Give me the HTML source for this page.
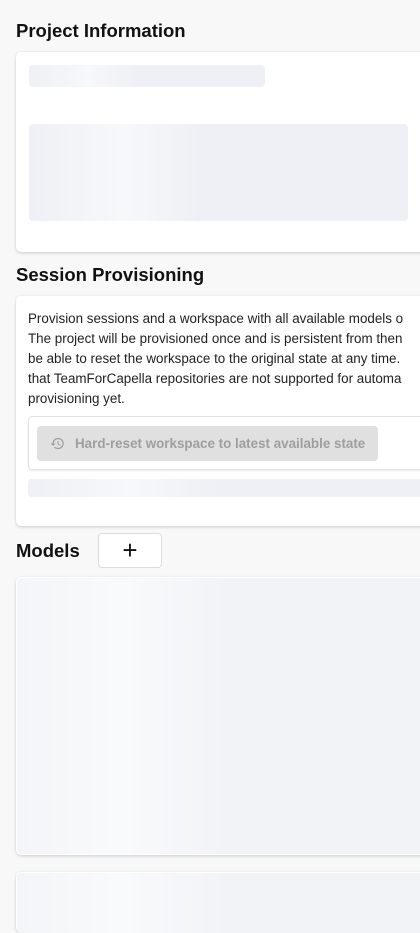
<!DOCTYPE html>
<html><head><style>
body{margin:0;width:420px;height:920px;overflow:hidden;background:#f8f8f9;font-family:"Liberation Sans",sans-serif;position:relative}
.h{position:absolute;left:16px;font-size:18.5px;font-weight:bold;color:#111}
.card{position:absolute;left:16px;width:420px;background:#fff;border-radius:5px;box-shadow:0 1px 3px rgba(0,0,0,.18)}
.sk{position:absolute;border-radius:4px;background:linear-gradient(90deg,#eff0f5 0%,#f7f8fa 25%,#eff0f5 45%,#eff0f5 100%)}
.sk2{position:absolute;border-radius:4px;background:linear-gradient(90deg,#f4f5f8 0%,#f9fafb 25%,#f2f3f7 50%,#f2f3f7 100%)}
.txt{position:absolute;left:12px;top:13px;font-size:13.4px;line-height:20px;color:#222;white-space:nowrap}
</style></head><body>
<div class="h" style="top:20px">Project Information</div>
<div class="card" style="top:52px;height:200px">
<div class="sk" style="left:13px;top:13px;width:236px;height:22px"></div>
<div class="sk" style="left:13px;top:72px;width:379px;height:97px"></div>
</div>
<div class="h" style="top:264px">Session Provisioning</div>
<div class="card" style="top:296px;height:230px">
<div class="txt">Provision sessions and a workspace with all available models o<br>The project will be provisioned once and is persistent from then<br>be able to reset the workspace to the original state at any time.<br>that TeamForCapella repositories are not supported for automa<br>provisioning yet.</div>
<div style="position:absolute;left:12px;top:120px;width:420px;height:52px;border:1px solid #e2e2e2;border-radius:4px;box-shadow:0 1px 2px rgba(0,0,0,.08)"></div>
<div style="position:absolute;left:21px;top:130px;width:341px;height:35px;background:#e0e0e0;border-radius:4px;color:#9e9e9e;font-size:13.4px;font-weight:bold;line-height:35px">
<svg style="position:absolute;left:13px;top:10px" width="15" height="15" viewBox="0 0 24 24" fill="#9e9e9e"><path d="M13 3a9 9 0 0 0-9 9H1l3.9 3.9L9 12H6a7 7 0 1 1 2.05 4.95l-1.42 1.42A9 9 0 1 0 13 3zm-1 5v5l4.25 2.52.77-1.28-3.52-2.09V8z"/></svg>
<span style="position:absolute;left:38px">Hard-reset workspace to latest available state</span></div>
<div class="sk" style="left:12px;top:183px;width:410px;height:18px"></div>
</div>
<div class="h" style="top:540px">Models</div>
<div style="position:absolute;left:98px;top:533px;width:62px;height:33px;border:1px solid #ddd;border-radius:4px;background:#fff;text-align:center;line-height:33px;font-size:26px;color:#111">+</div>
<div class="card" style="top:577px;height:278px"><div class="sk2" style="left:1px;top:1px;width:420px;height:276px"></div></div>
<div class="card" style="top:872px;height:60px"><div class="sk2" style="left:1px;top:1px;width:420px;height:60px"></div></div>
</body></html>
